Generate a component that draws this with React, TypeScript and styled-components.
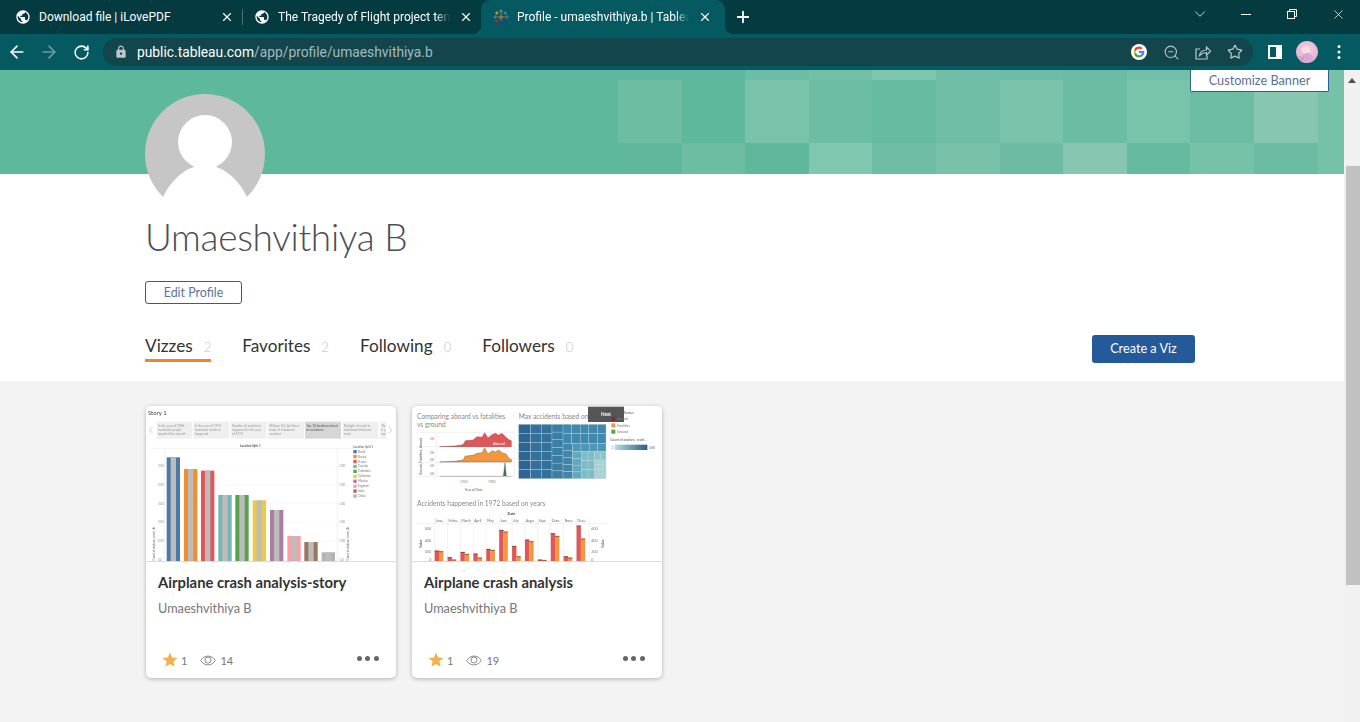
import styled, { createGlobalStyle } from 'styled-components'
import { ArrowLeft, ArrowRight, RotateCw, ZoomOut, Plus, X, ChevronDown, Star } from 'lucide-react'
import { MdPublic, MdLock, MdStar } from 'react-icons/md'

const GlobalStyle = createGlobalStyle`
  html, body {
    margin: 0;
    height: 100%;
    overflow: hidden;
    background: #fff;
    font-family: "Lato", "Liberation Sans", sans-serif;
  }
`

const Browser = styled.div`
  display: flex;
  flex-direction: column;
  width: 1360px;
  height: 722px;
  overflow: hidden;
`

const TabStrip = styled.div`
  display: flex;
  align-items: stretch;
  height: 34px;
  background: #033b41;
  flex-shrink: 0;
`

const Tab = styled.div<{ $width: number; $pad: number; $end: number; $active?: boolean; $sep?: boolean }>`
  position: relative;
  display: flex;
  align-items: center;
  box-sizing: border-box;
  width: ${(p) => p.$width}px;
  padding: 0 ${(p) => p.$end}px 0 ${(p) => p.$pad}px;
  gap: 8px;
  color: #fff;
  background: ${(p) => (p.$active ? '#045a60' : 'transparent')};
  border-radius: ${(p) => (p.$active ? '9px 9px 0 0' : '0')};

  ${(p) =>
    p.$sep &&
    `&::after {
      content: '';
      position: absolute;
      right: 0;
      top: 9px;
      bottom: 9px;
      width: 1px;
      background: #4d7276;
    }`}

  ${(p) =>
    p.$active &&
    `&::before, &::after {
      content: '';
      position: absolute;
      bottom: 0;
      width: 9px;
      height: 9px;
    }
    &::before {
      left: -9px;
      background: radial-gradient(circle at 0 0, transparent 9px, #045a60 9.5px);
    }
    &::after {
      right: -9px;
      background: radial-gradient(circle at 100% 0, transparent 9px, #045a60 9.5px);
    }`}
`

const TabTitle = styled.span<{ $fade?: boolean }>`
  flex: 1;
  min-width: 0;
  font-family: "Roboto", "Open Sans", sans-serif;
  font-size: 12px;
  white-space: nowrap;
  ${(p) =>
    p.$fade &&
    `-webkit-mask-image: linear-gradient(to right, #000 92%, transparent 100%);
    mask-image: linear-gradient(to right, #000 92%, transparent 100%);`}
`

const TabClose = styled.span`
  display: flex;
  align-items: center;
  justify-content: center;
  width: 16px;
  height: 16px;
  flex-shrink: 0;
`

const NewTab = styled.span`
  display: flex;
  align-items: center;
  justify-content: center;
  width: 36px;
`

const WindowControls = styled.div`
  display: flex;
  margin-left: auto;
  margin-right: -1px;
`

const WindowButton = styled.span`
  display: flex;
  align-items: center;
  justify-content: center;
  width: 46px;
  height: 28px;
`

const Toolbar = styled.div`
  display: flex;
  align-items: center;
  height: 36px;
  padding: 0 5px 0 1px;
  background: #045a60;
  flex-shrink: 0;
`

const NavButton = styled.span`
  display: flex;
  align-items: center;
  justify-content: center;
  width: 32px;
  height: 28px;
  flex-shrink: 0;
`

const Omnibox = styled.div`
  display: flex;
  align-items: center;
  width: 1150px;
  height: 28px;
  margin: 0 6px;
  padding: 0 2px 0 11px;
  box-sizing: border-box;
  border-radius: 14px;
  background: #12454c;
`

const UrlText = styled.div`
  flex: 1;
  margin-left: 9px;
  font-family: "Roboto", "Open Sans", sans-serif;
  font-size: 13.8px;
  color: #a3bbbe;
  white-space: nowrap;
`

const UrlHost = styled.span`
  color: #fff;
`

const Viewport = styled.div`
  flex: 1;
  display: flex;
  min-height: 0;
`

const Page = styled.div`
  width: 1344px;
  display: flex;
  flex-direction: column;
`

const Banner = styled.div`
  position: relative;
  height: 104px;
  padding-left: 618px;
  box-sizing: border-box;
  background: #5eb89b;
  display: grid;
  grid-template-columns: repeat(11, 63.6px) 1fr;
  grid-template-rows: 10px 63px 31px;
  flex-shrink: 0;
`

const Tile = styled.div<{ $color: string }>`
  background: ${(p) => p.$color};
`

const Avatar = styled.svg`
  position: absolute;
  left: 145px;
  top: 24px;
  width: 120px;
  height: 120px;
`

const CustomizeButton = styled.div`
  position: absolute;
  right: 15px;
  top: 0;
  width: 139px;
  height: 22px;
  padding-bottom: 2px;
  box-sizing: border-box;
  display: flex;
  align-items: center;
  justify-content: center;
  background: #fff;
  border: 1px solid #2f5d97;
  border-top: 0;
  border-radius: 0 0 2px 2px;
  font-size: 12.7px;
  color: #5a7099;
`

const ProfileHead = styled.div`
  height: 207px;
  box-sizing: border-box;
  padding: 40px 149px 0 145px;
  background: #fff;
  flex-shrink: 0;
`

const ProfileName = styled.h1`
  margin: 0;
  font-size: 37px;
  line-height: 46px;
  letter-spacing: -0.3px;
  font-weight: 300;
  color: #4a4f55;
`

const EditButton = styled.div`
  width: 97px;
  height: 23px;
  box-sizing: border-box;
  margin-top: 21px;
  padding-bottom: 1px;
  display: flex;
  align-items: center;
  justify-content: center;
  border: 1px solid #2f5d97;
  border-radius: 3px;
  font-size: 12.4px;
  color: #5a749f;
`

const TabsRow = styled.div`
  display: flex;
  justify-content: space-between;
  align-items: flex-start;
  margin-top: 31px;
`

const ProfileTabs = styled.div`
  display: flex;
  gap: 31px;
`

const ProfileTab = styled.div<{ $active?: boolean }>`
  display: flex;
  align-items: baseline;
  gap: 11px;
  height: 24px;
  font-size: 17.2px;
  line-height: 22px;
  color: #333;
  border-bottom: 3px solid ${(p) => (p.$active ? '#f28327' : 'transparent')};
`

const TabCount = styled.span`
  font-size: 13px;
  font-weight: 300;
  color: #c4c4c4;
`

const CreateButton = styled.div`
  width: 103px;
  height: 28px;
  padding-bottom: 2px;
  box-sizing: border-box;
  display: flex;
  align-items: center;
  justify-content: center;
  border-radius: 3px;
  background: #24599a;
  color: #fff;
  font-size: 12.7px;
`

const Gallery = styled.div`
  flex: 1;
  display: flex;
  align-items: flex-start;
  gap: 16px;
  padding: 25px 0 0 146px;
  background: #f3f3f3;
`

const Card = styled.div`
  width: 250px;
  height: 272px;
  display: flex;
  flex-direction: column;
  background: #fff;
  border-radius: 5px;
  box-shadow: 0 1px 4px rgba(0, 0, 0, 0.28);
  overflow: hidden;
`

const Thumb = styled.svg`
  display: block;
  width: 250px;
  height: 155px;
  flex-shrink: 0;
  border-bottom: 1px solid #dcdcdc;
  filter: blur(0.45px);
  font-family: "Lato", "Liberation Sans", sans-serif;
`

const CardBody = styled.div`
  flex: 1;
  display: flex;
  flex-direction: column;
  padding: 11px 12px 9px;
`

const CardTitle = styled.div`
  font-size: 14.8px;
  line-height: 18px;
  font-weight: 700;
  color: #333;
`

const CardAuthor = styled.div`
  margin-top: 9px;
  font-size: 12.7px;
  line-height: 16px;
  color: #777;
`

const CardFooter = styled.div`
  display: flex;
  align-items: center;
  margin-top: auto;
  padding-left: 3px;
  font-size: 11px;
  color: #777;
`

const FooterStat = styled.span<{ $gap: number }>`
  display: flex;
  align-items: center;
  gap: ${(p) => p.$gap}px;
  margin-right: 13px;
`

const MoreDots = styled.div`
  display: flex;
  gap: 3.7px;
  margin-left: auto;
  margin-right: 5px;
  margin-bottom: 4px;
`

const Dot = styled.span`
  width: 5px;
  height: 5px;
  border-radius: 50%;
  background: #666;
`

const Scrollbar = styled.div`
  width: 16px;
  background: #f1f1f1;
  display: flex;
  flex-direction: column;
  align-items: flex-end;
`

const ScrollArrow = styled.div`
  width: 16px;
  height: 20px;
  display: flex;
  align-items: center;
  justify-content: center;
`

const ScrollThumb = styled.div`
  width: 14px;
  height: 419px;
  margin-top: 76px;
  background: #c1c1c1;
`

const bannerTiles = [
  '#5eb89b', '#5eb89b', '#6bbda3', '#74c0a7', '#7fc6ae', '#70bea5', '#6dbda4', '#6abba2', '#70bfa6', '#6bbda4', '#6ebea5', '#76c2a9',
  '#6dbda3', '#5fb89c', '#78c3aa', '#6dbda4', '#67bba0', '#6fbea5', '#78c3aa', '#6bbca3', '#78c4ab', '#6bbda4', '#87c7b1', '#76c2a9',
  '#5fb89c', '#6dbda3', '#5fb89c', '#80c7af', '#6ebda4', '#77c2a9', '#6dbba3', '#87c7b1', '#66baa0', '#76c2a9', '#6bbca3', '#76c2a9',
]

const TableauMark = () => {
  const marks = [
    { x: 8, y: 8, s: 3.5, c: '#e8762b' },
    { x: 8, y: 2.2, s: 1.8, c: '#7a8ba0' },
    { x: 8, y: 13.8, s: 1.8, c: '#1f447a' },
    { x: 2.2, y: 8, s: 1.8, c: '#59879b' },
    { x: 13.8, y: 8, s: 1.8, c: '#7b6a96' },
    { x: 3.8, y: 4, s: 1.8, c: '#e0a030' },
    { x: 12.2, y: 4, s: 1.8, c: '#5b879b' },
    { x: 3.8, y: 12, s: 1.8, c: '#c72035' },
    { x: 12.2, y: 12, s: 1.8, c: '#1f447a' },
  ]
  return (
    <svg width="16" height="16" viewBox="0 0 16 16" style={{ flexShrink: 0 }}>
      {marks.map((m, i) => (
        <path
          key={i}
          d={`M${m.x - m.s} ${m.y}H${m.x + m.s}M${m.x} ${m.y - m.s}V${m.y + m.s}`}
          stroke={m.c}
          strokeWidth="1"
          fill="none"
        />
      ))}
    </svg>
  )
}

const GoogleLogo = () => (
  <svg width="16" height="16" viewBox="0 0 16 16">
    <circle cx="8" cy="8" r="8" fill="#fff" />
    <g transform="translate(2.6 2.6) scale(0.225)">
      <path fill="#4285F4" d="M47.5 24.6c0-1.6-.1-3.1-.4-4.6H24v8.7h13.2c-.6 3-2.3 5.6-4.9 7.3v6h7.9c4.6-4.3 7.3-10.5 7.3-17.4z" />
      <path fill="#34A853" d="M24 48c6.5 0 11.9-2.1 15.9-5.8l-7.9-6c-2.2 1.4-4.9 2.3-8 2.3-6.2 0-11.4-4.2-13.3-9.8H2.6v6.2C6.5 42.7 14.7 48 24 48z" />
      <path fill="#FBBC05" d="M10.7 28.7c-.5-1.4-.8-3-.8-4.7s.3-3.3.8-4.7v-6.2H2.6C1 16.3 0 20 0 24s1 7.7 2.6 10.9l8.1-6.2z" />
      <path fill="#EA4335" d="M24 9.5c3.5 0 6.7 1.2 9.2 3.6l6.9-6.9C35.9 2.4 30.5 0 24 0 14.7 0 6.5 5.3 2.6 13.1l8.1 6.2C12.6 13.7 17.8 9.5 24 9.5z" />
    </g>
  </svg>
)

const ShareIcon = () => (
  <svg width="18" height="18" viewBox="0 0 18 18" fill="none" stroke="#b9c8ca" strokeWidth="1.2">
    <path d="M6 6H2v10h11v-3" />
    <path d="M5.5 12.5c.5-3.5 3.5-5.5 7-5.500V4l4 4.200-4 4V9.500c-3 0-5 1-7 3z" />
  </svg>
)

const SidePanelIcon = () => (
  <svg width="14" height="14" viewBox="0 0 14 14">
    <rect width="14" height="14" fill="#fff" />
    <rect x="2" y="2" width="6" height="10" fill="#045a60" />
  </svg>
)

const ProfileBubble = () => (
  <svg width="22" height="22" viewBox="0 0 22 22">
    <defs>
      <radialGradient id="bubble" cx="50%" cy="40%" r="65%">
        <stop offset="0%" stopColor="#f5cfe0" />
        <stop offset="70%" stopColor="#e9b7d3" />
        <stop offset="100%" stopColor="#c7b0a8" />
      </radialGradient>
    </defs>
    <circle cx="11" cy="11" r="11" fill="url(#bubble)" />
    <circle cx="10" cy="9" r="4" fill="#f7dde6" />
    <path d="M4 20c1-6 4-8 7-8s6 2 7 7a11 11 0 0 1-14 1z" fill="#d9a8d6" />
    <path d="M3 15l3 4M8 15l-2 5" stroke="#b8a090" strokeWidth="1" fill="none" />
  </svg>
)

const KebabIcon = () => (
  <svg width="4" height="16" viewBox="0 0 4 16" fill="#fff">
    <circle cx="2" cy="2.5" r="1.5" />
    <circle cx="2" cy="8" r="1.5" />
    <circle cx="2" cy="13.5" r="1.5" />
  </svg>
)

const EyeIcon = () => (
  <svg width="16" height="11" viewBox="0 0 17 11" fill="none" stroke="#777" strokeWidth="0.9">
    <path d="M.7 5.5C3 2.2 5.6.8 8.5.8s5.500 1.400 7.800 4.700c-2.300 3.300-4.900 4.700-7.800 4.700S3 8.800.7 5.500z" />
    <circle cx="8.5" cy="5" r="3.2" />
  </svg>
)

const storyTiles = [
  { x: 50, w: 107, t: ['In the year of 1985,', 'maximum people', 'boarded the aircraft'] },
  { x: 160, w: 108, t: ['In the year of 1970', 'maximum accident', 'happened'] },
  { x: 272, w: 108, t: ['Number of accidents', 'happened in the year', 'of 1972'] },
  { x: 384, w: 108, t: ['Military U.S. Air Force', 'made in maximum', 'accident'] },
  { x: 495, w: 108, t: ['Top 10 locations based', 'on accidents'], active: true },
  { x: 607, w: 108, t: ['Daylight of crash in', 'maximum/minimum', 'crash'] },
  { x: 720, w: 18, t: ['The', 'by', 'rou'] },
]

const storyBars = [
  { x: 80, top: 172, c: '#4e79a7', name: 'Brazil' },
  { x: 132, top: 207, c: '#f28e2b', name: 'Russia' },
  { x: 183, top: 212, c: '#e15759', name: 'France' },
  { x: 235, top: 285, c: '#76b7b2', name: 'Canada' },
  { x: 286, top: 285, c: '#59a14f', name: 'Colombia' },
  { x: 338, top: 301, c: '#edc948', name: 'California' },
  { x: 390, top: 330, c: '#b07aa1', name: 'Mexico' },
  { x: 442, top: 408, c: '#ff9da7', name: 'England' },
  { x: 493, top: 426, c: '#9c755f', name: 'India' },
  { x: 545, top: 457, c: '#bab0ac', name: 'China' },
]

const storyTicks = [198, 255, 311, 367, 423, 479]

const StoryThumb = () => (
  <Thumb viewBox="18 18 750 465" preserveAspectRatio="none">
    <rect x="18" y="18" width="750" height="465" fill="#fff" />
    <text x="24" y="44" fontSize="18" fill="#444">Story 1</text>
    <path d="M38 80l-9 10 9 10M746 80l9 10-9 10" fill="none" stroke="#ccc" strokeWidth="3" />
    {storyTiles.map((tile) => (
      <g key={tile.x}>
        <rect x={tile.x} y="65" width={tile.w} height="51" fill={tile.active ? '#d6d6d6' : '#efefef'} />
        {tile.t.map((line, i) => (
          <text
            key={i}
            x={tile.x + 4}
            y={80 + i * 13}
            fontSize="9.5"
            fill={tile.active ? '#555' : '#999'}
            textLength={tile.w > 20 ? undefined : 14}
          >
            {line}
          </text>
        ))}
      </g>
    ))}
    <text x="331" y="141" fontSize="9" fontWeight="700" fill="#555" textAnchor="middle">Location Split 1</text>
    <path d="M28 145H640M73 145V483M592 145V483" stroke="#e4e4e4" strokeWidth="1.5" fill="none" />
    {storyTicks.map((y) => (
      <g key={y}>
        <path d={`M73 ${y}H592`} stroke="#f1f1f1" strokeWidth="1.5" />
        <text x="54" y={y + 3} fontSize="8.5" fill="#999">{y === 479 ? '0.0' : '0.00'}</text>
        <text x="599" y={y + 3} fontSize="8.5" fill="#999">{y === 479 ? '0.0' : '0.00'}</text>
      </g>
    ))}
    <text transform="translate(44 482) rotate(-90)" fontSize="8.5" fill="#666">Count of airplane_crash_da</text>
    <text transform="translate(628 482) rotate(-90)" fontSize="8.5" fill="#666">Count of airplane_crash_da</text>
    {storyBars.map((bar) => (
      <g key={bar.x}>
        <rect x={bar.x} y={bar.top} width="40" height={483 - bar.top} fill={bar.c} />
        <rect x={bar.x + 12} y={bar.top} width="16" height={483 - bar.top} fill="#bcbcbc" />
      </g>
    ))}
    <text x="639" y="143" fontSize="9" fill="#555">Location Split 1</text>
    {storyBars.map((bar, i) => (
      <g key={bar.name}>
        <rect x="640" y={150 + i * 14.8} width="10" height="10" fill={bar.c} />
        <text x="654" y={158 + i * 14.8} fontSize="9" fill="#777">{bar.name}</text>
      </g>
    ))}
  </Thumb>
)

const treeGroups = [
  { x: 332, y: 73, w: 36, h: 163, cols: 1, rows: 6, c: '#2f6591' },
  { x: 368, y: 73, w: 64, h: 163, cols: 2, rows: 6, c: '#33709b' },
  { x: 432, y: 73, w: 33, h: 163, cols: 1, rows: 7, c: '#3a7ea4' },
  { x: 465, y: 73, w: 129, h: 57, cols: 5, rows: 2, c: '#4189ac' },
  { x: 465, y: 130, w: 29, h: 106, cols: 1, rows: 5, c: '#3f86aa' },
  { x: 494, y: 130, w: 100, h: 25, cols: 4, rows: 1, c: '#4f97b4' },
  { x: 494, y: 155, w: 26, h: 81, cols: 1, rows: 4, c: '#65a8bd' },
  { x: 520, y: 155, w: 40, h: 81, cols: 2, rows: 3, c: '#80bcc6' },
  { x: 560, y: 155, w: 34, h: 25, cols: 2, rows: 1, c: '#8dc5cb' },
  { x: 560, y: 180, w: 34, h: 56, cols: 3, rows: 4, c: '#a3d3d3' },
]

const Treemap = () => (
  <g>
    {treeGroups.flatMap((g) =>
      Array.from({ length: g.cols * g.rows }, (_, i) => {
        const cw = g.w / g.cols
        const ch = g.h / g.rows
        return (
          <rect
            key={`${g.x}-${g.y}-${i}`}
            x={g.x + (i % g.cols) * cw}
            y={g.y + Math.floor(i / g.cols) * ch}
            width={cw}
            height={ch}
            fill={g.c}
            stroke="#b9d4de"
            strokeWidth="1"
          />
        )
      }),
    )}
  </g>
)

const monthBars = [
  { m: 'Janu..', red: 452, orange: 454 },
  { m: 'Febru..', red: 472, orange: 479 },
  { m: 'March', red: 456, orange: 462 },
  { m: 'April', red: 461, orange: 473 },
  { m: 'May', red: 447, orange: 450 },
  { m: 'June', red: 390, orange: 395 },
  { m: 'July', red: 438, orange: 469 },
  { m: 'Augu..', red: 419, orange: 424 },
  { m: 'Sept..', red: 479, orange: 480 },
  { m: 'Octo..', red: 400, orange: 408 },
  { m: 'Nove..', red: 469, orange: 473 },
  { m: 'Dece..', red: 377, orange: 416 },
]

const AnalysisThumb = () => (
  <Thumb viewBox="12 18 750 465" preserveAspectRatio="none">
    <rect x="12" y="18" width="750" height="465" fill="#fff" />
    <text x="27" y="56" fontSize="20" fill="#888">Comparing aboard vs fatalities</text>
    <text x="27" y="82" fontSize="20" fill="#888">vs ground</text>
    <text x="332" y="56" fontSize="20" fill="#888">Max accidents based on years</text>

    <path d="M24 97H320M24 140H320M24 188H320M24 230H320M85 97V230M320 97V230" stroke="#e2e2e2" strokeWidth="1.5" fill="none" />
    <path d="M95 140L140 138 165 134 172 122 195 120 207 110 222 112 230 98 240 114 252 104 262 100 272 106 282 100 294 112 304 120 310 122V140z" fill="#e15759" stroke="#5a2a2a" strokeWidth="1" />
    <path d="M95 186L140 184 165 180 172 168 195 166 207 160 222 158 230 144 240 162 252 152 262 156 272 150 282 158 294 162 304 176 310 178V186z" fill="#f1973f" stroke="#5a3a1a" strokeWidth="1" />
    <path d="M95 229H286L291 188 295 229H310" fill="#3f7d3f" stroke="#444" strokeWidth="1" />
    <text x="255" y="135" fontSize="11" fill="#fff">Aboard</text>
    <g fontSize="10" fill="#888">
      <text x="66" y="121">2K</text>
      <text x="66" y="161">2K</text>
      <text x="66" y="182">0K</text>
      <text x="66" y="200">5K</text>
      <text x="66" y="226">0K</text>
      <text x="156" y="249">1942</text>
      <text x="240" y="249">1982</text>
    </g>
    <text x="170" y="272" fontSize="10" fill="#555">Year of Date</text>
    <text transform="translate(42 226) rotate(-90)" fontSize="10" fill="#555">Ground, Fatalities, Aboard</text>

    <Treemap />

    <rect x="540" y="20" width="108" height="46" fill="#555" />
    <text x="594" y="48" fontSize="14" fontWeight="700" fill="#fff" textAnchor="middle">Next</text>
    <text x="606" y="41" fontSize="10" fill="#555">Measure Names</text>
    <rect x="610" y="51" width="12" height="12" fill="#7a2f33" />
    <rect x="610" y="70" width="12" height="12" fill="#f1973f" />
    <rect x="610" y="89" width="12" height="12" fill="#59a14f" />
    <g fontSize="10" fill="#777">
      <text x="627" y="61">Aboard</text>
      <text x="627" y="80">Fatalities</text>
      <text x="627" y="99">Ground</text>
    </g>
    <text x="606" y="124" fontSize="10" fill="#555">Count of airplane_crash...</text>
    <defs>
      <linearGradient id="treeScale">
        <stop offset="0%" stopColor="#b5dfdc" />
        <stop offset="100%" stopColor="#2a5a8a" />
      </linearGradient>
    </defs>
    <rect x="620" y="134" width="98" height="16" fill="url(#treeScale)" />
    <text x="610" y="146" fontSize="10" fill="#777">1</text>
    <text x="723" y="146" fontSize="10" fill="#777">208</text>

    <text x="27" y="319" fontSize="20" fill="#888">Accidents happened in 1972 based on years</text>
    <text x="310" y="346" fontSize="11" fontWeight="700" fill="#444" textAnchor="middle">Date</text>
    <path d="M24 371H600" stroke="#e4e4e4" strokeWidth="1.5" />
    {monthBars.map((b, i) => {
      const x = 80 + i * 38.7
      return (
        <g key={b.m}>
          <text x={x + 3} y="365" fontSize="10" fill="#666">{b.m}</text>
          <path d={`M${x} 352V483`} stroke="#e6e6e6" strokeWidth="1.5" />
          <rect x={x} y={b.red} width="13" height={483 - b.red} fill="#e15759" />
          <rect x={x + 13} y={b.orange} width="13" height={483 - b.orange} fill="#f1973f" />
          <path d={`M${x} ${b.red + 1}h13M${x + 13} ${b.orange + 1}h13`} stroke="#6a3a30" strokeWidth="2" />
        </g>
      )
    })}
    <path d="M544 352V483" stroke="#e6e6e6" strokeWidth="1.5" />
    <g fontSize="11" fill="#777">
      <text x="50" y="389">600</text>
      <text x="50" y="425">400</text>
      <text x="50" y="460">200</text>
      <text x="64" y="483">0</text>
      <text x="550" y="389">600</text>
      <text x="550" y="425">400</text>
      <text x="550" y="460">200</text>
      <text x="550" y="483">0</text>
    </g>
    <text transform="translate(43 444) rotate(-90)" fontSize="10" fontWeight="700" fill="#555">Value</text>
    <text transform="translate(588 444) rotate(-90)" fontSize="10" fontWeight="700" fill="#555">Value</text>
  </Thumb>
)

const cards = [
  { title: 'Airplane crash analysis-story', views: 14, Preview: StoryThumb },
  { title: 'Airplane crash analysis', views: 19, Preview: AnalysisThumb },
]

const profileTabs = [
  { label: 'Vizzes', count: 2, active: true },
  { label: 'Favorites', count: 2 },
  { label: 'Following', count: 0 },
  { label: 'Followers', count: 0 },
]

function App() {
  return (
    <Browser>
      <GlobalStyle />
      <TabStrip>
        <Tab $width={243} $pad={15} $end={8} $sep>
          <MdPublic size={16} color="#fff" style={{ flexShrink: 0 }} />
          <TabTitle>Download file | iLovePDF</TabTitle>
          <TabClose><X size={14} color="#fff" /></TabClose>
        </Tab>
        <Tab $width={238} $pad={11} $end={7}>
          <MdPublic size={16} color="#fff" style={{ flexShrink: 0 }} />
          <TabTitle $fade>The Tragedy of Flight project tem</TabTitle>
          <TabClose><X size={14} color="#fff" /></TabClose>
        </Tab>
        <Tab $width={244} $pad={12} $end={12} $active>
          <TableauMark />
          <TabTitle $fade>Profile - umaeshvithiya.b | Tablea</TabTitle>
          <TabClose><X size={14} color="#fff" /></TabClose>
        </Tab>
        <NewTab><Plus size={18} color="#fff" strokeWidth={2.4} /></NewTab>
        <WindowControls>
          <WindowButton><ChevronDown size={18} color="#d5e0e1" strokeWidth={1.2} /></WindowButton>
          <WindowButton>
            <svg width="10" height="10" viewBox="0 0 10 10"><path d="M0 5.5H10" stroke="#fff" /></svg>
          </WindowButton>
          <WindowButton>
            <svg width="10" height="10" viewBox="0 0 10 10" fill="none" stroke="#fff">
              <rect x="0.5" y="2.5" width="7" height="7" />
              <path d="M2.5 2.5V.5h7v7H7.5" />
            </svg>
          </WindowButton>
          <WindowButton><X size={15} color="#fff" strokeWidth={1.2} /></WindowButton>
        </WindowControls>
      </TabStrip>

      <Toolbar>
        <NavButton><ArrowLeft size={20} color="#fff" strokeWidth={2} /></NavButton>
        <NavButton><ArrowRight size={20} color="#6f9a9d" strokeWidth={2} /></NavButton>
        <NavButton><RotateCw size={17} color="#fff" strokeWidth={2.2} /></NavButton>
        <Omnibox>
          <MdLock size={14} color="#b9c8ca" />
          <UrlText>
            <UrlHost>public.tableau.com</UrlHost>/app/profile/umaeshvithiya.b
          </UrlText>
          <NavButton><GoogleLogo /></NavButton>
          <NavButton><ZoomOut size={17} color="#b9c8ca" strokeWidth={1.5} /></NavButton>
          <NavButton><ShareIcon /></NavButton>
          <NavButton><Star size={16} color="#b9c8ca" strokeWidth={1.8} /></NavButton>
        </Omnibox>
        <NavButton><SidePanelIcon /></NavButton>
        <NavButton><ProfileBubble /></NavButton>
        <NavButton><KebabIcon /></NavButton>
      </Toolbar>

      <Viewport>
        <Page>
          <Banner>
            {bannerTiles.map((color, i) => (
              <Tile key={i} $color={color} />
            ))}
            <Avatar viewBox="0 0 120 120">
              <circle cx="60" cy="60" r="60" fill="#c6c6c6" />
              <circle cx="60" cy="48" r="27" fill="#fff" />
              <path d="M18 103C28 82 45 71 60 71S92 82 102 103V120H18z" fill="#fff" />
              <rect x="0" y="103" width="120" height="17" fill="#fff" />
            </Avatar>
            <CustomizeButton>Customize Banner</CustomizeButton>
          </Banner>

          <ProfileHead>
            <ProfileName>Umaeshvithiya B</ProfileName>
            <EditButton>Edit Profile</EditButton>
            <TabsRow>
              <ProfileTabs>
                {profileTabs.map((tab) => (
                  <ProfileTab key={tab.label} $active={tab.active}>
                    {tab.label}
                    <TabCount>{tab.count}</TabCount>
                  </ProfileTab>
                ))}
              </ProfileTabs>
              <CreateButton>Create a Viz</CreateButton>
            </TabsRow>
          </ProfileHead>

          <Gallery>
            {cards.map(({ title, views, Preview }) => (
              <Card key={title}>
                <Preview />
                <CardBody>
                  <CardTitle>{title}</CardTitle>
                  <CardAuthor>Umaeshvithiya B</CardAuthor>
                  <CardFooter>
                    <FooterStat $gap={2}>
                      <MdStar size={18} color="#f2b04e" />
                      1
                    </FooterStat>
                    <FooterStat $gap={4}>
                      <EyeIcon />
                      {views}
                    </FooterStat>
                    <MoreDots>
                      <Dot />
                      <Dot />
                      <Dot />
                    </MoreDots>
                  </CardFooter>
                </CardBody>
              </Card>
            ))}
          </Gallery>
        </Page>

        <Scrollbar>
          <ScrollArrow>
            <svg width="8" height="5" viewBox="0 0 8 5"><path d="M4 0l4 5H0z" fill="#505050" /></svg>
          </ScrollArrow>
          <ScrollThumb />
        </Scrollbar>
      </Viewport>
    </Browser>
  )
}

export default App
